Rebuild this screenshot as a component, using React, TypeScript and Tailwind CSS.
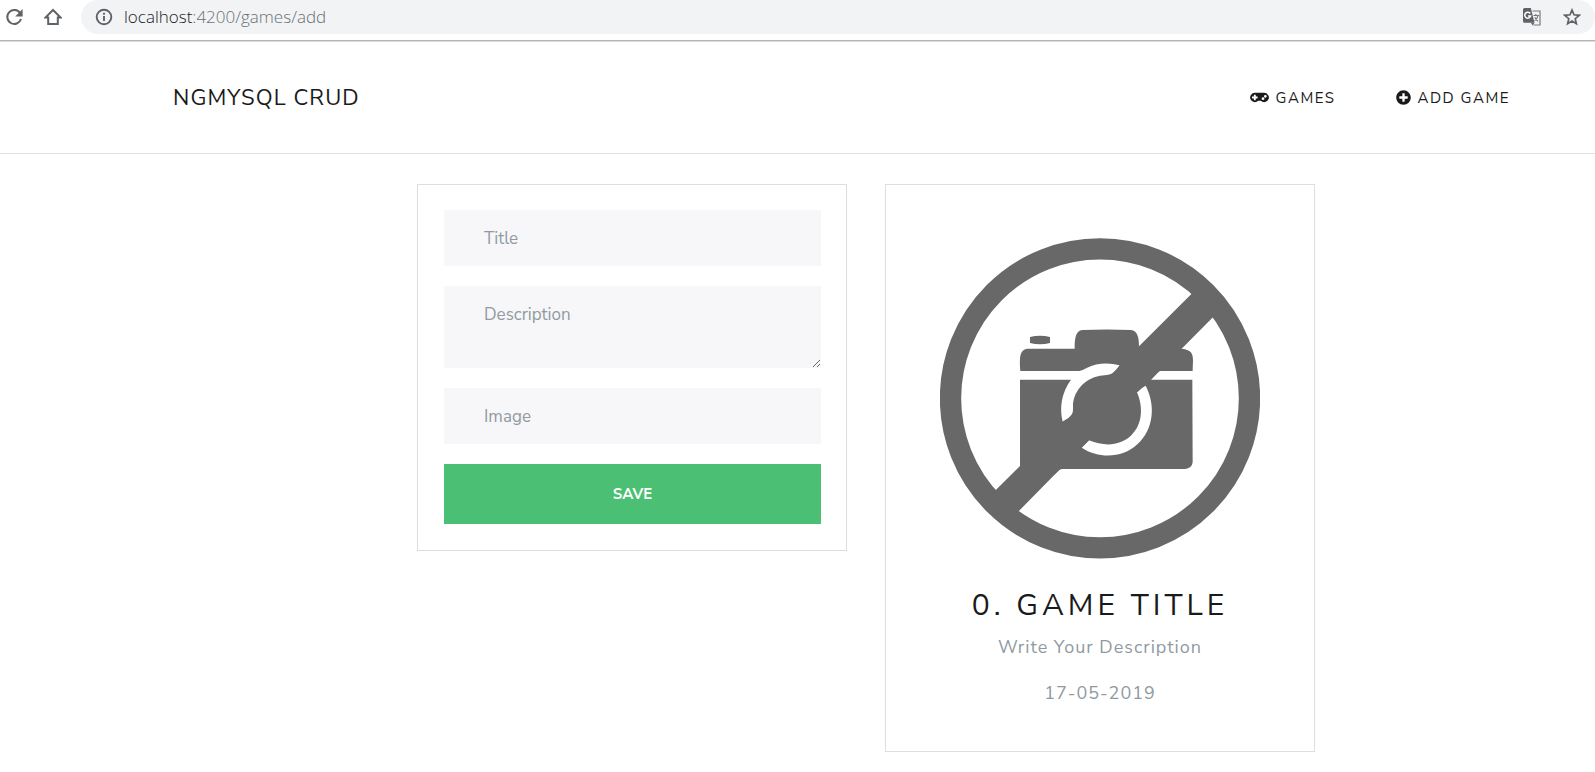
import { FaPlusCircle } from "react-icons/fa";

function ReloadIcon() {
  return (
    <svg viewBox="0 0 18 18" className="size-[18px]" fill="none">
      <path d="M15.2 5.2A7 7 0 1 0 16 11" stroke="#5f6368" strokeWidth="2" />
      <path d="M17.6 1v7.4h-7.4z" fill="#5f6368" />
    </svg>
  );
}

function HomeIcon() {
  return (
    <svg viewBox="0 0 18 18" className="size-[18px]" fill="none">
      <path d="M1.6 9.4 9 2l7.4 7.4h-2.6V16H4.2V9.4z" stroke="#5f6368" strokeWidth="2" />
    </svg>
  );
}

function InfoIcon() {
  return (
    <svg viewBox="0 0 18 18" className="size-[18px]" fill="none">
      <circle cx="9" cy="9" r="7.3" stroke="#5f6368" strokeWidth="1.9" />
      <path d="M9 8v5M9 4.8v2" stroke="#5f6368" strokeWidth="1.9" />
    </svg>
  );
}

function TranslateIcon() {
  return (
    <svg viewBox="0 0 18 18" className="size-[18px]" fill="none">
      <path d="M9.5 3H17v14h-6.500" stroke="#777b80" strokeWidth="1.2" />
      <path d="M1.500 0H7.800l3.700 14.800H1.500A1.500 1.500 0 0 1 0 13.300V1.500A1.500 1.500 0 0 1 1.500 0z" fill="#5f6368" />
      <path d="M7.900 14.800h3.600L9.700 17.400z" fill="#5f6368" />
      <path d="M7.300 5.500A3 3 0 1 0 7.700 7.900H5" stroke="#fff" strokeWidth="1.500" />
      <path d="M10.500 7.500h5.500M12.800 6v1.500M15 7.500c-.5 2.500-1.800 4-3.500 5.200M11.800 9.300c.8 1.800 2 3 3.200 4" stroke="#777b80" strokeWidth="1.200" />
    </svg>
  );
}

function StarIcon() {
  return (
    <svg viewBox="0 0 18 18" className="size-[18px]" fill="none">
      <path
        d="m9 2 2 4.800 5.200.5-4 3.400 1.200 5.100L9 13.100l-4.400 2.700 1.200-5.100-4-3.400 5.200-.5z"
        stroke="#5f6368"
        strokeWidth="1.700"
      />
    </svg>
  );
}

function GamepadIcon() {
  return (
    <svg viewBox="0 0 640 512" className="h-[15px] w-[19px]" fill="currentColor">
      <path
        fillRule="evenodd"
        d="M480 96H160a160 160 0 1 0 114.200 272h91.500A160 160 0 1 0 480 96zM256 276c0 6.600-5.400 12-12 12h-52v52c0 6.600-5.400 12-12 12h-40c-6.600 0-12-5.400-12-12v-52H76c-6.600 0-12-5.400-12-12v-40c0-6.600 5.400-12 12-12h52v-52c0-6.600 5.400-12 12-12h40c6.600 0 12 5.400 12 12v52h52c6.600 0 12 5.400 12 12v40zM440 248a48 48 0 1 0 0 96 48 48 0 0 0 0-96zM520 168a48 48 0 1 0 0 96 48 48 0 0 0 0-96z"
      />
    </svg>
  );
}

function NoPhoto() {
  return (
    <svg viewBox="180 205 960 962" className="mx-auto block w-[320px] max-w-full" role="img" aria-label="No image">
      <circle cx="660" cy="686" r="448.500" fill="none" stroke="#686868" strokeWidth="64" />
      <path
        fill="#686868"
        d="M421 603C418 560 419 537 447 537H584C584 505 587 483 607 481Q680 478 753 481C772 483 777 502 777 530L800 537H905C935 541 939 552 939 572L937 631 938 878Q936 896 915 898H548Q537 898 525 914L420 889V631z"
      />
      <path fill="#686868" d="M450 502Q480 495 510 502V520Q480 528 450 520z" />
      <path
        fill="#fff"
        d="M415 604H598Q606 603 620 595Q665 573 719 587Q706 604 697 611Q691 616 660 618C612 626 578 668 579 712C580 734 575 740 548 756C538 715 544 670 573 630H415z"
      />
      <path
        fill="#fff"
        d="M797 648C827 706 822 778 772 824C726 867 656 867 605 834L627 812C673 831 722 829 754 797C788 764 790 712 771 668Q785 653 797 648z"
      />
      <path fill="#fff" d="M945 604H845Q833 603 828 611L813 630H945z" />
      <path fill="#686868" d="M950 357 777 530 719 587 660 690 548 756 420 889 330 978 400 1041 525 914 627 812 771 668 813 630 905 537 1015 426z" />
    </svg>
  );
}

const fieldClass =
  "block w-full bg-[#f7f7f9] px-10 text-[17px] leading-[26px] text-[#1a1a1a] outline-none placeholder:text-[#919aa1]";

export default function App() {
  return (
    <div className="min-h-screen bg-white font-['Nunito_Sans',Lato,sans-serif] text-[#1a1a1a]">
      <div className="flex h-[42px] items-start border-b border-[#dcdcdc] shadow-[inset_0_-1px_0_#b4b4b4]">
        <button type="button" aria-label="Reload" className="ml-[5px] mt-2">
          <ReloadIcon />
        </button>
        <button type="button" aria-label="Home" className="ml-[21px] mt-2">
          <HomeIcon />
        </button>
        <div className="ml-[19px] flex h-[34px] grow items-center rounded-full bg-[#f1f3f4] px-[14px]">
          <InfoIcon />
          <p className="ml-[11px] grow font-['Segoe_UI','Open_Sans',sans-serif] text-[17px] font-light leading-6 text-[#6b7075]">
            <span className="text-[#202124]">localhost</span>:4200/games/add
          </p>
          <button type="button" aria-label="Translate this page">
            <TranslateIcon />
          </button>
          <button type="button" aria-label="Bookmark this page" className="ml-[22px]">
            <StarIcon />
          </button>
        </div>
      </div>

      <header className="flex h-28 items-center justify-between border-b border-[#e0e0e0] pl-[173px] pr-[85px]">
        <a href="#" className="text-[22px] leading-8 tracking-wider uppercase">
          NgMySQL CRUD
        </a>
        <nav className="flex gap-[60px] text-[15px] leading-6 tracking-widest uppercase">
          <a href="#games" className="flex items-center gap-[7px]">
            <GamepadIcon />
            Games
          </a>
          <a href="#add" className="flex items-center gap-[7px]">
            <FaPlusCircle className="size-[15px]" />
            Add Game
          </a>
        </nav>
      </header>

      <main className="pb-5 pl-[137px] pt-[30px]">
        <div className="mx-auto grid max-w-[898px] grid-cols-2 items-start gap-[38px]">
          <form className="flex flex-col gap-5 border border-[#dedede] pb-[26px] pl-[26px] pr-[25px] pt-[25px]">
            <input type="text" placeholder="Title" aria-label="Title" className={`${fieldClass} h-14`} />
            <textarea
              placeholder="Description"
              aria-label="Description"
              className={`${fieldClass} h-[82px] py-4`}
            />
            <input type="text" placeholder="Image" aria-label="Image" className={`${fieldClass} h-14`} />
            <button type="button" className="h-[60px] bg-[#4bbf73] text-[15px] font-bold uppercase text-white">
              Save
            </button>
          </form>

          <article className="border border-[#dedede] px-[26px] pb-[45px] pt-[53px] text-center">
            <NoPhoto />
            <h1 className="mt-[29px] text-[30px] leading-9 tracking-[4px] uppercase">0. Game Title</h1>
            <p className="mt-[10px] text-[18px] leading-[26px] tracking-[1px] text-[#919aa1]">Write Your Description</p>
            <p className="mt-5 text-[18px] leading-[26px] tracking-[1px] text-[#919aa1]">17-05-2019</p>
          </article>
        </div>
      </main>
    </div>
  );
}
